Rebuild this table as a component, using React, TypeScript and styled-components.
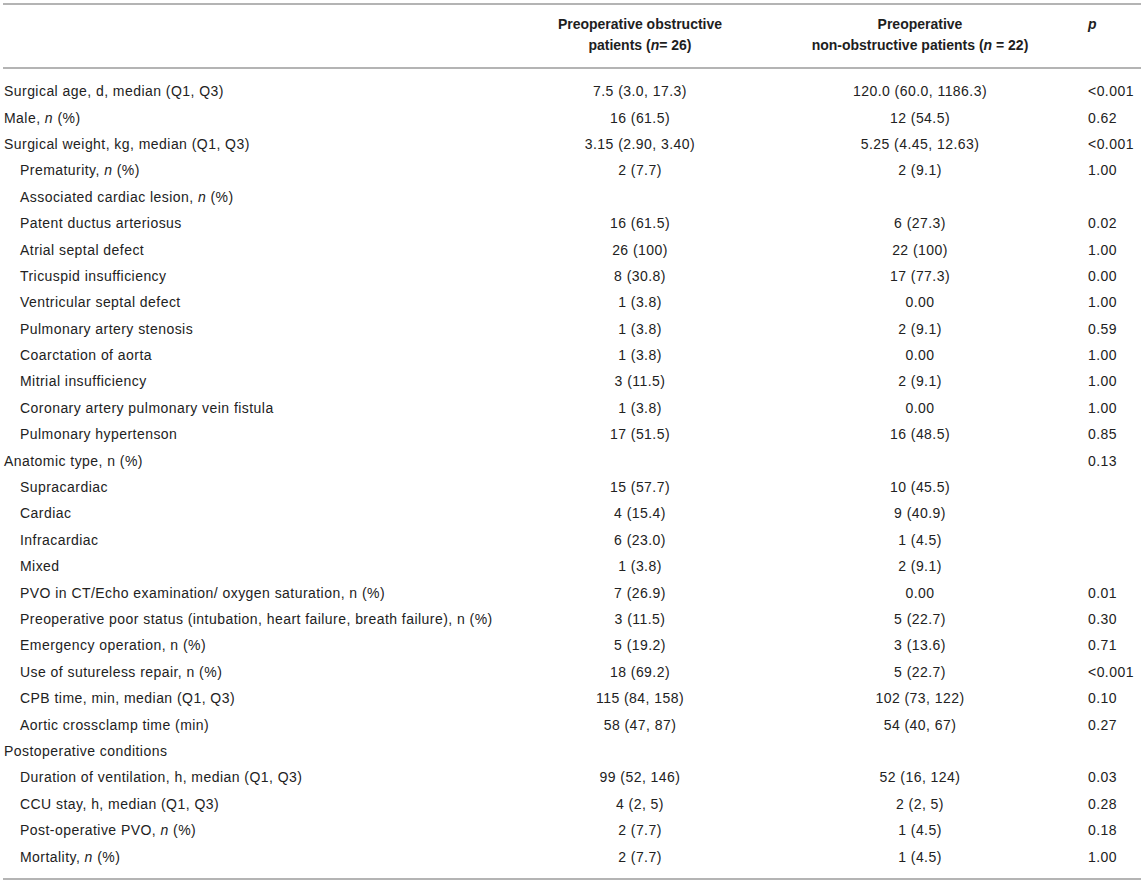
import React from "react";
import styled, { createGlobalStyle } from "styled-components";

const GlobalStyle = createGlobalStyle`
  html, body { margin: 0; padding: 0; background: #ffffff; }
  body { font-family: "Liberation Sans", Arial, Helvetica, sans-serif; color: #222222; }
`;

const COLS = "517px 240px 320px 1fr";

const Table = styled.div`
  width: 1138px;
  margin: 3px 0 0 3px;
  border-top: 2px solid #b4b4b4;
  border-bottom: 2px solid #b4b4b4;
`;

const HeadRow = styled.div`
  display: grid;
  grid-template-columns: ${COLS};
  padding: 9px 0 11px;
  border-bottom: 2px solid #b4b4b4;
`;

const HeadCell = styled.div<{ $align?: "left" | "center" }>`
  font-size: 14px;
  font-weight: 700;
  line-height: 21px;
  color: #1e1e1e;
  text-align: ${(p) => p.$align ?? "center"};
  padding-left: ${(p) => (p.$align === "left" ? "8px" : "0")};
  white-space: nowrap;
`;

const Body = styled.div`
  display: flex;
  flex-direction: column;
  padding: 9px 0 8px;
`;

const Row = styled.div`
  display: grid;
  grid-template-columns: ${COLS};
  height: 26.4px;
  align-items: center;
  font-size: 14px;
  letter-spacing: 0.45px;
  color: #222222;
`;

const Label = styled.div<{ $indent: boolean }>`
  padding-left: ${(p) => (p.$indent ? "17px" : "1px")};
  white-space: nowrap;
`;

const Value = styled.div`
  text-align: center;
  white-space: nowrap;
`;

const PValue = styled.div`
  padding-left: 8px;
  white-space: nowrap;
`;

type RowData = {
  label: React.ReactNode;
  a?: string;
  b?: string;
  p?: string;
  indent?: boolean;
};

const N = () => <i>n</i>;

const rows: RowData[] = [
  { label: "Surgical age, d, median (Q1, Q3)", a: "7.5 (3.0, 17.3)", b: "120.0 (60.0, 1186.3)", p: "<0.001" },
  { label: <>Male, <N /> (%)</>, a: "16 (61.5)", b: "12 (54.5)", p: "0.62" },
  { label: "Surgical weight, kg, median (Q1, Q3)", a: "3.15 (2.90, 3.40)", b: "5.25 (4.45, 12.63)", p: "<0.001" },
  { label: <>Prematurity, <N /> (%)</>, a: "2 (7.7)", b: "2 (9.1)", p: "1.00", indent: true },
  { label: <>Associated cardiac lesion, <N /> (%)</>, indent: true },
  { label: "Patent ductus arteriosus", a: "16 (61.5)", b: "6 (27.3)", p: "0.02", indent: true },
  { label: "Atrial septal defect", a: "26 (100)", b: "22 (100)", p: "1.00", indent: true },
  { label: "Tricuspid insufficiency", a: "8 (30.8)", b: "17 (77.3)", p: "0.00", indent: true },
  { label: "Ventricular septal defect", a: "1 (3.8)", b: "0.00", p: "1.00", indent: true },
  { label: "Pulmonary artery stenosis", a: "1 (3.8)", b: "2 (9.1)", p: "0.59", indent: true },
  { label: "Coarctation of aorta", a: "1 (3.8)", b: "0.00", p: "1.00", indent: true },
  { label: "Mitrial insufficiency", a: "3 (11.5)", b: "2 (9.1)", p: "1.00", indent: true },
  { label: "Coronary artery pulmonary vein fistula", a: "1 (3.8)", b: "0.00", p: "1.00", indent: true },
  { label: "Pulmonary hypertenson", a: "17 (51.5)", b: "16 (48.5)", p: "0.85", indent: true },
  { label: "Anatomic type, n (%)", p: "0.13" },
  { label: "Supracardiac", a: "15 (57.7)", b: "10 (45.5)", indent: true },
  { label: "Cardiac", a: "4 (15.4)", b: "9 (40.9)", indent: true },
  { label: "Infracardiac", a: "6 (23.0)", b: "1 (4.5)", indent: true },
  { label: "Mixed", a: "1 (3.8)", b: "2 (9.1)", indent: true },
  { label: "PVO in CT/Echo examination/ oxygen saturation, n (%)", a: "7 (26.9)", b: "0.00", p: "0.01", indent: true },
  { label: "Preoperative poor status (intubation, heart failure, breath failure), n (%)", a: "3 (11.5)", b: "5 (22.7)", p: "0.30", indent: true },
  { label: "Emergency operation, n (%)", a: "5 (19.2)", b: "3 (13.6)", p: "0.71", indent: true },
  { label: "Use of sutureless repair, n (%)", a: "18 (69.2)", b: "5 (22.7)", p: "<0.001", indent: true },
  { label: "CPB time, min, median (Q1, Q3)", a: "115 (84, 158)", b: "102 (73, 122)", p: "0.10", indent: true },
  { label: "Aortic crossclamp time (min)", a: "58 (47, 87)", b: "54 (40, 67)", p: "0.27", indent: true },
  { label: "Postoperative conditions" },
  { label: "Duration of ventilation, h, median (Q1, Q3)", a: "99 (52, 146)", b: "52 (16, 124)", p: "0.03", indent: true },
  { label: "CCU stay, h, median (Q1, Q3)", a: "4 (2, 5)", b: "2 (2, 5)", p: "0.28", indent: true },
  { label: <>Post-operative PVO, <N /> (%)</>, a: "2 (7.7)", b: "1 (4.5)", p: "0.18", indent: true },
  { label: <>Mortality, <N /> (%)</>, a: "2 (7.7)", b: "1 (4.5)", p: "1.00", indent: true },
];

export default function App() {
  return (
    <>
      <GlobalStyle />
      <Table>
        <HeadRow>
          <HeadCell $align="left" />
          <HeadCell>
            Preoperative obstructive
            <br />
            patients (<i>n</i>= 26)
          </HeadCell>
          <HeadCell>
            Preoperative
            <br />
            non-obstructive patients (<i>n</i> = 22)
          </HeadCell>
          <HeadCell $align="left">
            <i>p</i>
          </HeadCell>
        </HeadRow>
        <Body>
          {rows.map((r, i) => (
            <Row key={i}>
              <Label $indent={!!r.indent}>{r.label}</Label>
              <Value>{r.a ?? ""}</Value>
              <Value>{r.b ?? ""}</Value>
              <PValue>{r.p ?? ""}</PValue>
            </Row>
          ))}
        </Body>
      </Table>
    </>
  );
}
